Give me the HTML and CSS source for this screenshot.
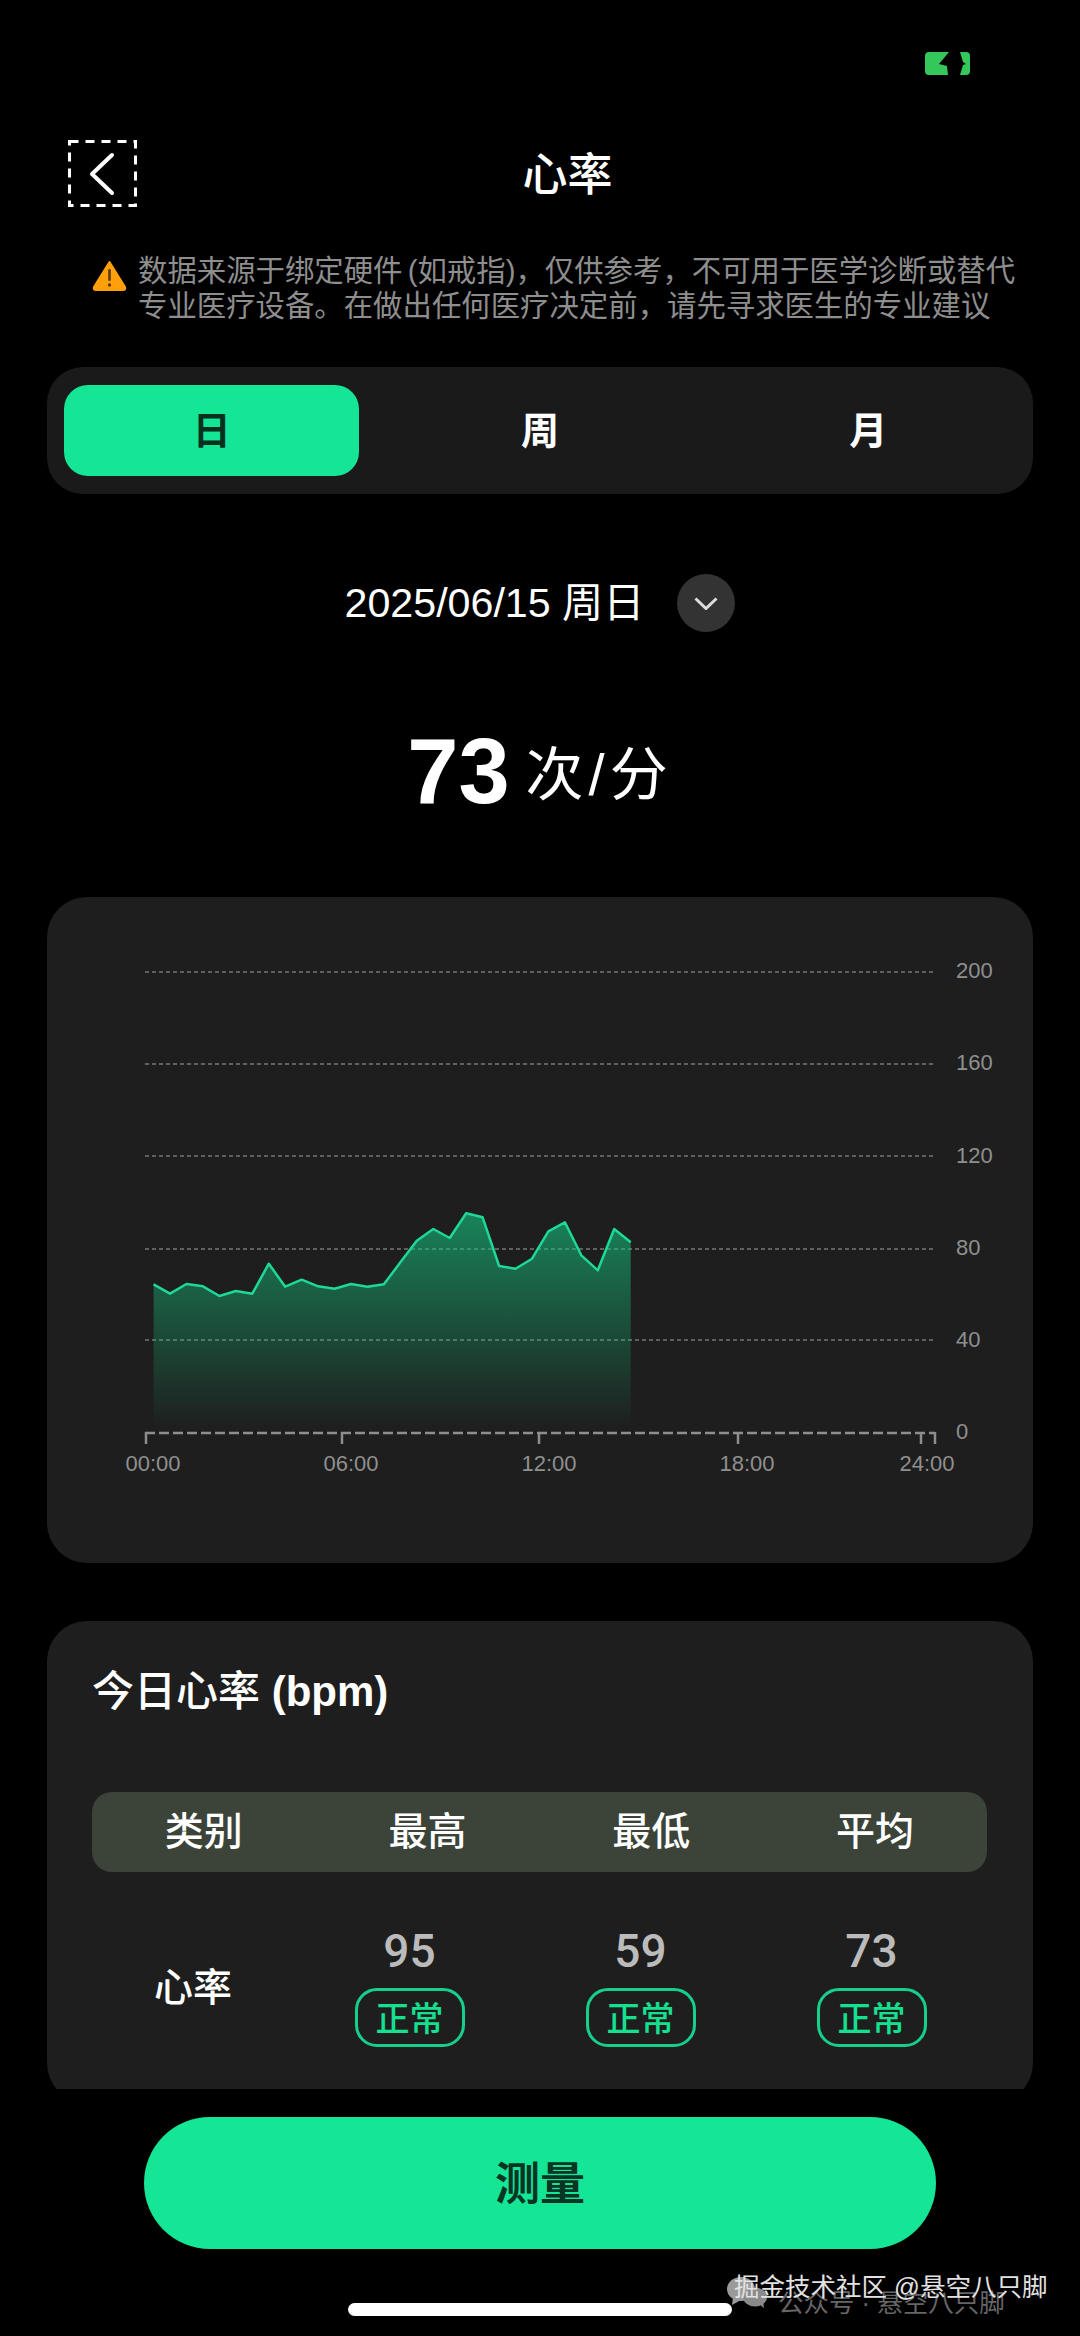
FILE: index.html
```html
<!DOCTYPE html>
<html lang="zh-CN">
<head>
  <meta charset="UTF-8">
  <title>心率</title>
  <link rel="stylesheet" href="styles.css">
</head>
<body>
  <div class="page">
    <div class="content">
      <div class="status-bar">
        <svg class="battery" viewBox="0 0 45 23">
          <rect width="45" height="23" rx="4" fill="#34c759"/>
          <polygon points="24,0 14,12 22,14 23,23 35,23 38,13 41,12 38,10 35,0" fill="#000"/>
        </svg>
      </div>

      <div class="header">
        <svg class="back-btn" viewBox="0 0 69 67">
          <rect class="back-frame" x="1.5" y="1.5" width="66" height="64"/>
          <polyline class="back-arrow" points="44,15 24,34 44,53"/>
        </svg>
        <h1 class="title">心率</h1>
      </div>

      <div class="notice">
        <svg class="notice-icon" viewBox="0 0 35 31">
          <path d="M17.5 2 L33 27 Q34 30 31 30 L4 30 Q1 30 2 27 Z" fill="#ff9f0a" stroke="#ff9f0a" stroke-width="2" stroke-linejoin="round"/>
          <rect x="16.2" y="9" width="2.6" height="12" rx="1.2" fill="#5a3a00"/>
          <circle cx="17.5" cy="25" r="1.7" fill="#5a3a00"/>
        </svg>
        <p>数据来源于绑定硬件 (如戒指)，仅供参考，不可用于医学诊断或替代<br>专业医疗设备。在做出任何医疗决定前，请先寻求医生的专业建议</p>
      </div>

      <div class="tabs">
        <div class="tab active">日</div>
        <div class="tab">周</div>
        <div class="tab">月</div>
      </div>

      <div class="date-row">
        <span class="date-text">2025/06/15 周日</span>
        <div class="date-btn">
          <svg viewBox="0 0 24 13"><polyline points="1.5,1.5 12,11.5 22.5,1.5"/></svg>
        </div>
      </div>

      <div class="current-rate">
        <span class="rate-num">73</span>
        <span class="rate-unit">次/分</span>
      </div>

      <div class="card chart-card">
        <svg class="chart" viewBox="0 0 986 666">
          <defs>
            <linearGradient id="areaFill" gradientUnits="userSpaceOnUse" x1="0" y1="316" x2="0" y2="532">
              <stop offset="0" stop-color="#14c781" stop-opacity="0.6"/>
              <stop offset="1" stop-color="#14c781" stop-opacity="0"/>
            </linearGradient>
          </defs>

          <g class="grid">
            <line x1="98" x2="888" y1="75" y2="75"/>
            <line x1="98" x2="888" y1="167" y2="167"/>
            <line x1="98" x2="888" y1="259" y2="259"/>
            <line x1="98" x2="888" y1="352" y2="352"/>
            <line x1="98" x2="888" y1="443" y2="443"/>
          </g>

          <polygon fill="url(#areaFill)" points="106.6,536 106.6,387.3 123,396.7 139.5,387 155.9,389.3 172.4,399 188.9,394 205.3,396.7 221.8,366.7 238.2,389.7 254.7,382.7 271.1,389.3 287.6,391.7 304,387 320.5,389.7 336.9,387.3 353.4,365.3 369.8,343.7 386.3,332 402.7,341 419.2,316.3 435.6,320.3 452.1,369 468.5,371.7 485,361.7 501.4,334.3 517.9,325.3 534.3,358.3 550.8,373.3 567.2,332 583.7,345.3 583.7,536"/>
          <polyline class="rate-line" points="106.6,387.3 123,396.7 139.5,387 155.9,389.3 172.4,399 188.9,394 205.3,396.7 221.8,366.7 238.2,389.7 254.7,382.7 271.1,389.3 287.6,391.7 304,387 320.5,389.7 336.9,387.3 353.4,365.3 369.8,343.7 386.3,332 402.7,341 419.2,316.3 435.6,320.3 452.1,369 468.5,371.7 485,361.7 501.4,334.3 517.9,325.3 534.3,358.3 550.8,373.3 567.2,332 583.7,345.3"/>

          <line class="axis" x1="98" x2="888" y1="536" y2="536"/>
          <g class="ticks">
            <line x1="99" x2="99" y1="535" y2="547"/>
            <line x1="295" x2="295" y1="535" y2="547"/>
            <line x1="492" x2="492" y1="535" y2="547"/>
            <line x1="691" x2="691" y1="535" y2="547"/>
            <line x1="874" x2="874" y1="535" y2="547"/>
            <line x1="888" x2="888" y1="535" y2="547"/>
          </g>

          <g class="y-labels">
            <text x="909" y="81">200</text>
            <text x="909" y="173">160</text>
            <text x="909" y="266">120</text>
            <text x="909" y="358">80</text>
            <text x="909" y="450">40</text>
            <text x="909" y="542">0</text>
          </g>
          <g class="x-labels">
            <text x="106" y="574">00:00</text>
            <text x="304" y="574">06:00</text>
            <text x="502" y="574">12:00</text>
            <text x="700" y="574">18:00</text>
            <text x="880" y="574">24:00</text>
          </g>
        </svg>
      </div>

      <div class="card stats-card">
        <h2 class="stats-title">今日心率 <b>(bpm)</b></h2>
        <div class="stats-head">
          <span>类别</span>
          <span>最高</span>
          <span>最低</span>
          <span>平均</span>
        </div>
        <div class="stats-row">
          <div class="stats-name">心率</div>
          <div class="stats-cell"><span class="stats-value">95</span><span class="badge">正常</span></div>
          <div class="stats-cell"><span class="stats-value">59</span><span class="badge">正常</span></div>
          <div class="stats-cell"><span class="stats-value">73</span><span class="badge">正常</span></div>
        </div>
      </div>
    </div>

    <div class="footer">
      <button class="measure-btn">测量</button>
      <div class="home-bar"></div>
    </div>

    <div class="watermark">
      <svg class="wm-icon" viewBox="0 0 40 31">
        <ellipse cx="14" cy="12" rx="14" ry="12" fill="#9a9a9a"/>
        <polygon points="6,20 5,28 14,23" fill="#9a9a9a"/>
        <ellipse cx="28" cy="20" rx="12" ry="9.5" fill="#8a8a8a"/>
        <polygon points="32,27 37,31 36,24" fill="#8a8a8a"/>
      </svg>
      <span class="wm-ghost">公众号 · 悬空八只脚</span>
      <span class="wm-text">掘金技术社区 @悬空八只脚</span>
    </div>
  </div>
</body>
</html>
```

FILE: styles.css
```css
* { box-sizing: border-box; }
html, body { margin: 0; padding: 0; background: #000; }
body { font-family: "Liberation Sans", "Noto Sans CJK SC", sans-serif; color: #fff; }

.page { position: relative; width: 1080px; height: 2336px; display: flex; flex-direction: column; overflow: hidden; }
.content { flex: 1; min-height: 0; overflow: hidden; padding: 0 47px; }

.status-bar { height: 140px; margin: 0 -47px; padding: 52px 110px 0 0; display: flex; justify-content: flex-end; align-items: flex-start; }
.battery { width: 45px; height: 23px; }

.header { display: flex; align-items: center; margin: 0 35px 0 21px; }
.back-btn { width: 69px; height: 67px; flex: none; fill: none; stroke: #fff; }
.back-frame { stroke-width: 3; stroke-dasharray: 9 7; }
.back-arrow { stroke-width: 4; stroke-linecap: round; stroke-linejoin: round; }
.title { flex: 1; margin: 0; padding-top: 4px; text-align: center; font-size: 45px; line-height: 60px; font-weight: 500; }

.notice { display: flex; align-items: flex-start; gap: 11px; margin: 45px 0 0 45px; }
.notice-icon { width: 35px; height: 31px; margin-top: 8px; flex: none; }
.notice p { margin: 1px 0 0; font-size: 29.4px; line-height: 35px; word-spacing: -3px; color: #8e8e8e; white-space: nowrap; }

.tabs { display: flex; gap: 33px; height: 127px; margin-top: 44px; padding: 18px 17px; background: #1a1a1a; border-radius: 36px; }
.tab { width: 296px; padding-bottom: 6px; border-radius: 24px; display: flex; align-items: center; justify-content: center; font-size: 38px; font-weight: 700; }
.tab.active { background: #14e696; color: #07301f; }

.date-row { display: flex; align-items: center; justify-content: center; gap: 33px; height: 58px; margin-top: 80px; font-size: 41.2px; line-height: 48px; }
.date-btn { width: 58px; height: 58px; border-radius: 50%; background: #333; display: flex; align-items: center; justify-content: center; }
.date-btn svg { width: 24px; height: 13px; fill: none; stroke: #ddd; stroke-width: 3; }

.current-rate { display: flex; align-items: center; justify-content: center; gap: 16px; height: 100px; margin-top: 90px; }
.rate-num { font-size: 92px; line-height: 100px; font-weight: 700; padding-bottom: 2px; }
.rate-unit { font-size: 58px; line-height: 70px; letter-spacing: 5px; padding-top: 6px; }

.card { background: #1e1e1e; border-radius: 40px; }
.chart-card { height: 666px; margin-top: 75px; }
.chart { display: block; width: 986px; height: 666px; }
.grid line { stroke: #777; stroke-width: 1.5; stroke-dasharray: 4 3; }
.rate-line { fill: none; stroke: #1ed898; stroke-width: 2.5; stroke-linejoin: round; }
.axis { stroke: #8e8e8e; stroke-width: 2.5; stroke-dasharray: 10 4; }
.ticks line { stroke: #8e8e8e; stroke-width: 2.5; }
.y-labels text, .x-labels text { font-size: 22px; fill: #8f8f8f; }
.x-labels text { text-anchor: middle; }

.stats-card { margin-top: 58px; padding: 44px 46px 56px 45px; }
.stats-title { margin: 0; font-size: 42px; line-height: 54px; font-weight: 500; }
.stats-title b { font-weight: 700; }
.stats-head { display: grid; grid-template-columns: repeat(4, 1fr); height: 80px; margin-top: 73px; background: #3c4338; border-radius: 20px; font-size: 39px; font-weight: 500; }
.stats-head span { display: flex; align-items: center; justify-content: center; padding-bottom: 8px; }
.stats-row { display: grid; grid-template-columns: 202px repeat(3, 231px); margin-top: 54px; }
.stats-name { align-self: center; padding-bottom: 6px; text-align: center; font-size: 39px; font-weight: 500; }
.stats-cell { display: flex; flex-direction: column; align-items: center; gap: 12px; }
.stats-value { font-family: Roboto, sans-serif; font-size: 46px; line-height: 50px; font-weight: 500; color: #bbb; }
.badge { width: 110px; height: 59px; padding-bottom: 3px; border: 3px solid #17cf8c; border-radius: 22px; display: flex; align-items: center; justify-content: center; font-size: 34px; font-weight: 500; color: #14e08f; }

.footer { flex: none; height: 247px; background: #000; padding-top: 28px; display: flex; flex-direction: column; align-items: center; }
.measure-btn { width: 792px; height: 132px; padding-bottom: 6px; border: 0; border-radius: 66px; background: #14e696; color: #0a3524; font-family: inherit; font-size: 45px; font-weight: 700; }
.home-bar { width: 384px; height: 13px; margin-top: 54px; border-radius: 7px; background: #fff; }

/* repost stamp on top of the bottom corner */
.watermark { position: absolute; left: 727px; top: 2266px; width: 340px; height: 46px; font-size: 25.5px; white-space: nowrap; }
.wm-icon { position: absolute; left: 0; top: 11px; width: 40px; height: 31px; }
.wm-ghost { position: absolute; left: 51px; top: 16px; color: #666; }
.wm-text { position: absolute; left: 7px; top: 0; color: #e2e2e2; }
```
